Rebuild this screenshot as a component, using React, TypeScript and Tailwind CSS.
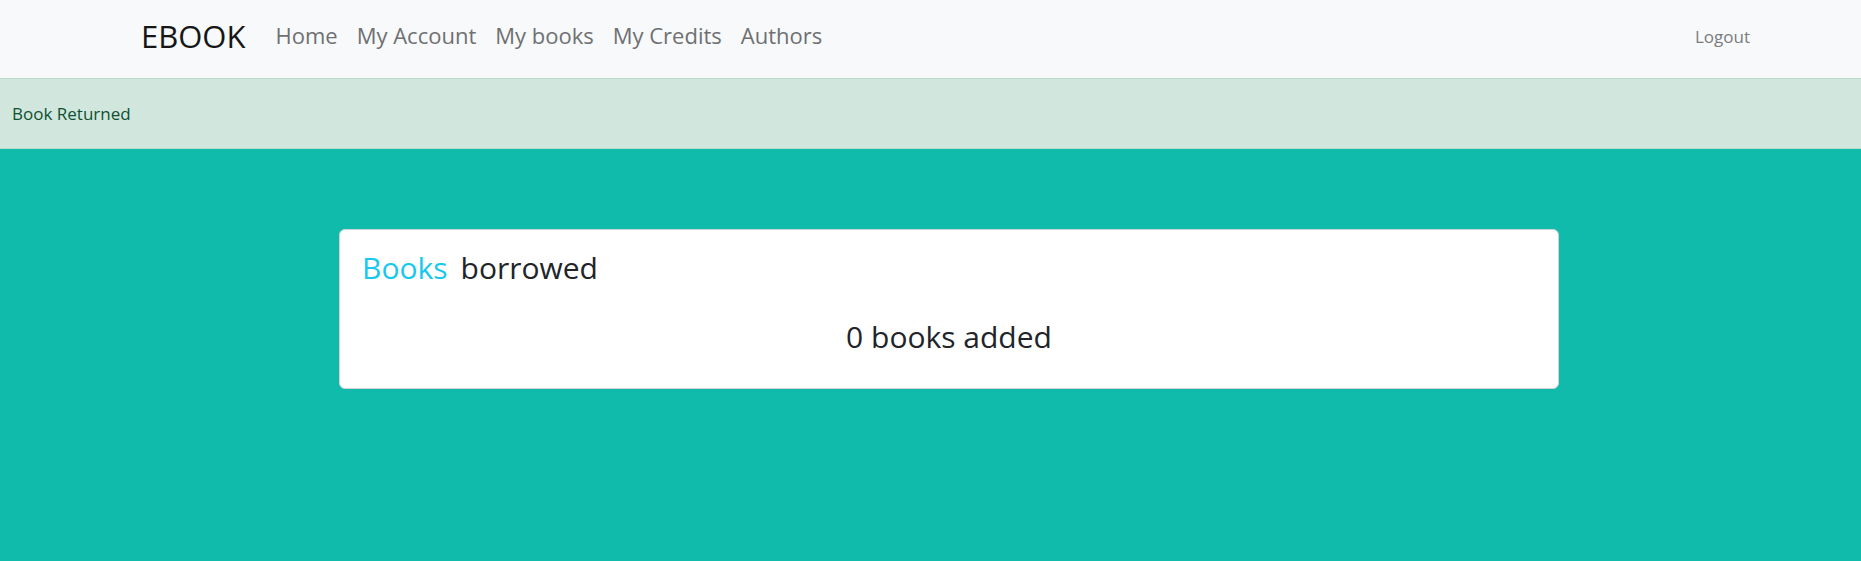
import React from "react";

export default function App() {
  const font = { fontFamily: "'Open Sans', Lato, sans-serif" };
  return (
    <div className="min-h-[561px] bg-[#11bbab]" style={font}>
      <nav className="h-[78px] bg-[#f8f9fa] flex items-center pl-[141px] pr-[111px] pb-[6px]">
        <div className="text-[31px] leading-none text-[#161616] mr-[30px]">EBOOK</div>
        <ul className="flex items-center gap-[19px] text-[22px] leading-none text-[#6e7072] pb-[3px]">
          <li>Home</li>
          <li>My Account</li>
          <li>My books</li>
          <li>My Credits</li>
          <li>Authors</li>
        </ul>
        <div className="ml-auto text-[17px] leading-none text-[#7a7c7e]">Logout</div>
      </nav>
      <div className="h-[71px] bg-[#d1e7dd] border-y border-[#badbcc] flex items-center px-[12px] text-[17px] text-[#0f5132]">
        Book Returned
      </div>
      <div className="pt-[80px] pl-[339px] pr-[302px] flex">
        <div className="flex-1 bg-white border border-[#cfd3d3] rounded-[6px] px-[22px] pt-[21px] pb-[34px]">
          <h3 className="text-[30px] leading-[34px] text-[#212529] flex gap-[13px]">
            <span className="text-[#18c8ef]">Books</span>
            <span>borrowed</span>
          </h3>
          <p className="mt-[35px] text-center text-[30px] leading-[34px] text-[#212529]">0 books added</p>
        </div>
      </div>
    </div>
  );
}
